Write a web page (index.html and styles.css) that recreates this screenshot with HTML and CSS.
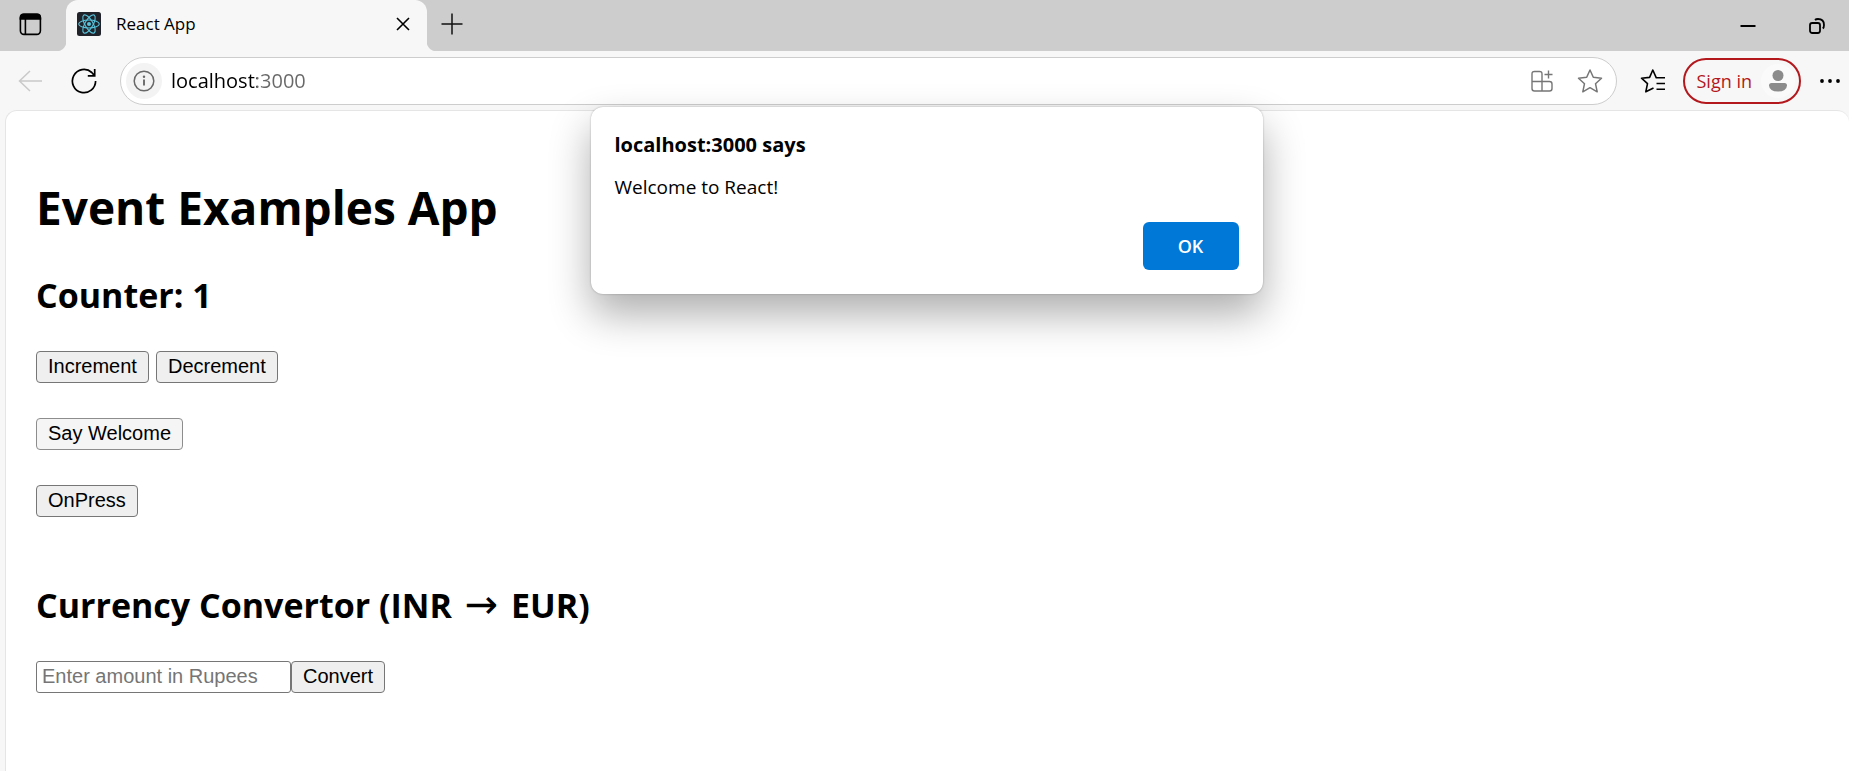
FILE: index.html
```html
<!DOCTYPE html>
<html lang="en">
<head>
<meta charset="utf-8">
<title>React App</title>
<link rel="stylesheet" href="styles.css">
</head>
<body>
<header class="tab-strip">
  <button class="icon-button tab-actions" aria-label="Tab actions">
    <svg width="24" height="24" viewBox="0 0 24 24" fill="none" stroke="#000" stroke-width="1.6"><rect x="2.4" y="2.4" width="20" height="20" rx="3.6"/><path d="M2.4 7V5.500Q2.400 2.400 5.500 2.400H19.300Q22.400 2.400 22.400 5.500V7Z" fill="#000"/><path d="M7.400 7V22"/></svg>
  </button>
  <div class="tab">
    <svg class="favicon" width="24" height="24" viewBox="0 0 24 24" fill="none" stroke="#58c4dc" stroke-width="1.1"><rect width="24" height="24" rx="2.500" fill="#20232a" stroke="none"/><ellipse cx="12" cy="12" rx="10.300" ry="4"/><ellipse cx="12" cy="12" rx="10.300" ry="4" transform="rotate(60 12 12)"/><ellipse cx="12" cy="12" rx="10.300" ry="4" transform="rotate(120 12 12)"/><circle cx="12" cy="12" r="2" fill="#58c4dc" stroke="none"/></svg>
    <span class="tab-title">React App</span>
    <button class="icon-button" aria-label="Close tab">
      <svg width="14" height="14" viewBox="0 0 14 14" fill="none" stroke="#000" stroke-width="1.600"><path d="M1 1L13 13M13 1L1 13"/></svg>
    </button>
  </div>
  <button class="icon-button new-tab" aria-label="New tab">
    <svg width="22" height="22" viewBox="0 0 22 22" fill="none" stroke="#111" stroke-width="1.500"><path d="M11 .5V21.500M.5 11H21.500"/></svg>
  </button>
  <div class="window-controls">
    <button class="icon-button" aria-label="Minimize">
      <svg width="16" height="16" viewBox="0 0 16 16" stroke="#000" stroke-width="2"><path d="M.5 8H15.500"/></svg>
    </button>
    <button class="icon-button" aria-label="Restore">
      <svg width="16" height="16" viewBox="0 0 16 16" fill="none" stroke="#000" stroke-width="1.800"><rect x="1" y="5" width="10" height="10" rx="2.200"/><path d="M6 2Q7 1 9 1Q15 1 15 7Q15 9.500 13.800 10.500"/></svg>
    </button>
  </div>
</header>
<nav class="toolbar">
  <button class="icon-button" aria-label="Back">
    <svg width="24" height="24" viewBox="0 0 24 24" fill="none" stroke="#c9c9c9" stroke-width="1.500"><path d="M12 2L1.500 12L12 22M1.500 12H24"/></svg>
  </button>
  <button class="icon-button" aria-label="Refresh">
    <svg width="26" height="26" viewBox="0 0 26 26" fill="none" stroke="#000" stroke-width="1.700"><path d="M24.600 13A11.600 11.600 0 1 1 20.800 4.500L23.500 7.600M23.700 1V7.900H16.800"/></svg>
  </button>
  <div class="address-bar">
    <button class="icon-button site-info" aria-label="View site information">
      <svg width="22" height="22" viewBox="0 0 22 22" fill="none" stroke="#686868" stroke-width="1.500"><circle cx="11" cy="11" r="9.800"/><path d="M11 9.500V15.500" stroke-width="1.900"/><circle cx="11" cy="6.800" r="1.200" fill="#686868" stroke="none"/></svg>
    </button>
    <input class="address-input" type="text" value="localhost:3000" aria-label="Address">
    <button class="icon-button" aria-label="Apps">
      <svg width="24" height="24" viewBox="0 0 24 24" fill="none" stroke="#767676" stroke-width="1.400"><path d="M12 22V5Q12 2.500 9.500 2.500H4.500Q2 2.500 2 5V19.500Q2 22 4.500 22H19.500Q22 22 22 19.500V15Q22 12.500 19.500 12.500H2M18.500 1.500V9.500M14.500 5.500H22.500"/></svg>
    </button>
    <button class="icon-button" aria-label="Add to favorites">
      <svg width="26" height="26" viewBox="0 0 26 26" fill="none" stroke="#767676" stroke-width="1.500" stroke-linejoin="round"><path d="M13 2L16.300 9.300L24.500 10.200L18.500 15.700L20.200 23.800L13 19.700L5.800 23.800L7.500 15.700L1.500 10.200L9.700 9.300Z"/></svg>
    </button>
  </div>
  <button class="icon-button" aria-label="Favorites">
    <svg width="26" height="26" viewBox="0 0 26 26" fill="none" stroke="#000" stroke-width="1.600" stroke-linejoin="round"><path d="M25 9.800H16.300L12.800 2L9.600 9.400L1.500 10.200L7.500 15.700L5.800 23.800L13.500 20M16.500 15.500H25M16.500 21.200H25"/></svg>
  </button>
  <button class="sign-in">Sign in
    <span class="avatar"><svg width="18" height="22" viewBox="0 0 18 22" fill="#8b8b8b"><circle cx="9" cy="5.500" r="5.500"/><path d="M2.500 13H15.500Q18 13 18 15.500Q17.500 21.500 9 21.500Q.5 21.500 0 15.500Q0 13 2.500 13Z"/></svg></span>
  </button>
  <button class="icon-button" aria-label="Settings and more">
    <svg width="20" height="4" viewBox="0 0 20 4"><circle cx="2" cy="2" r="1.900"/><circle cx="10" cy="2" r="1.900"/><circle cx="18" cy="2" r="1.900"/></svg>
  </button>
</nav>
<main class="page">
  <h1 class="title">Event Examples App</h1>
  <h2 class="heading">Counter: 1</h2>
  <div class="row spaced">
    <button class="btn">Increment</button>
    <button class="btn">Decrement</button>
  </div>
  <div class="row"><button class="btn btn-active">Say Welcome</button></div>
  <div class="row"><button class="btn">OnPress</button></div>
  <section class="convertor">
    <h2 class="heading">Currency Convertor (INR <span class="arrow">→</span> EUR)</h2>
    <form class="row">
      <input class="amount" type="text" placeholder="Enter amount in Rupees" aria-label="Amount in rupees">
      <button class="btn" type="button">Convert</button>
    </form>
  </section>
</main>
<div class="alert" role="alertdialog" aria-labelledby="alert-title" aria-describedby="alert-text">
  <h2 class="alert-title" id="alert-title">localhost:3000 says</h2>
  <p class="alert-text" id="alert-text">Welcome to React!</p>
  <button class="alert-ok">OK</button>
</div>
</body>
</html>
```
FILE: styles.css
```css
* {
  box-sizing: border-box;
}

body {
  margin: 0;
  min-height: 100vh;
  display: flex;
  flex-direction: column;
  background: #f7f7f7;
  color: #000;
  font-family: "Open Sans", "Noto Sans", sans-serif;
  overflow: hidden;
}

svg {
  display: block;
}

.icon-button {
  flex: none;
  display: flex;
  align-items: center;
  justify-content: center;
  padding: 0;
  border: 0;
  background: none;
}

.tab-strip {
  display: flex;
  align-items: center;
  height: 51px;
  padding: 0 24px 0 18px;
  background: #cdcdcd;
}

.tab-actions,
.new-tab {
  margin-bottom: 4px;
}

.tab {
  position: relative;
  display: flex;
  align-items: center;
  align-self: stretch;
  gap: 15px;
  width: 361px;
  margin: 0 14px 0 24px;
  padding: 0 17px 3px 11px;
  border-radius: 12px 12px 0 0;
  background: #f7f7f7;
}

.tab::before,
.tab::after {
  content: "";
  position: absolute;
  bottom: 0;
  width: 10px;
  height: 10px;
}

.tab::before {
  right: 100%;
  background: radial-gradient(circle at 0 0, #cdcdcd 10px, #f7f7f7 11px);
}

.tab::after {
  left: 100%;
  background: radial-gradient(circle at 100% 0, #cdcdcd 10px, #f7f7f7 11px);
}

.tab-title {
  flex: 1;
  font-size: 17px;
  line-height: 24px;
}

.window-controls {
  display: flex;
  gap: 53px;
  margin-left: auto;
}

.toolbar {
  display: flex;
  align-items: center;
  height: 59px;
  padding: 0 9px 0 18px;
}

.toolbar > .icon-button:first-child {
  margin-right: 29px;
}

.address-bar {
  flex: 1;
  display: flex;
  align-items: center;
  gap: 23px;
  height: 48px;
  margin: 0 23px;
  padding: 0 13px 0 5px;
  border: 1px solid #cdcdcd;
  border-radius: 24px;
  background: #fff;
}

.site-info {
  width: 36px;
  height: 36px;
  border-radius: 50%;
  background: #f3f3f3;
}

.address-input {
  flex: 1;
  min-width: 0;
  margin-left: -14px;
  padding: 0;
  border: 0;
  outline: 0;
  background: linear-gradient(to right, #000 86px, #686868 86px);
  background-clip: text;
  color: transparent;
  font: 20px/28px "Open Sans", "Noto Sans", sans-serif;
}

.sign-in {
  display: flex;
  align-items: center;
  gap: 9px;
  height: 46px;
  margin: 0 19px 0 17px;
  padding: 0 4px 0 12px;
  border: 2px solid #b3181d;
  border-radius: 23px;
  background: #f7f7f7;
  color: #b3181d;
  font: 18px/24px "Open Sans", "Noto Sans", sans-serif;
}

.avatar {
  display: flex;
  align-items: center;
  justify-content: center;
  width: 34px;
  height: 34px;
  border-radius: 50%;
  background: #fafafa;
}

.page {
  flex: 1;
  margin-left: 5px;
  padding: 64px 30px 32px;
  border: 1px solid #e5e5e5;
  border-width: 1px 0 0 1px;
  border-radius: 12px 12px 0 0;
  background: #fff;
}

.title {
  margin: 0 0 32px;
  font-size: 46px;
  line-height: 64px;
}

.heading {
  margin: 0 0 32px;
  font-size: 34px;
  line-height: 48px;
}

.arrow {
  margin: 0 4px;
  font: 40px/40px "DejaVu Sans", sans-serif;
}

.row {
  display: flex;
  margin-bottom: 35px;
}

.spaced {
  gap: 7px;
}

.btn {
  height: 32px;
  padding: 0 11px 2px;
  border: 1px solid #767676;
  border-radius: 4px;
  background: #efefef;
  color: #000;
  font: 20px/28px "Liberation Sans", Arial, sans-serif;
}

.btn-active {
  border-color: #8d8d8d;
  background: #f5f5f5;
}

.convertor {
  margin-top: 64px;
}

.amount {
  width: 255px;
  height: 32px;
  padding: 0 5px 2px;
  border: 1px solid #767676;
  border-radius: 3px;
  background: #fff;
  font: 20px/28px "Liberation Sans", Arial, sans-serif;
}

.amount::placeholder {
  color: #757575;
}

.alert {
  position: absolute;
  top: 107px;
  left: calc(50% - 334px);
  display: flex;
  flex-direction: column;
  width: 672px;
  padding: 24px;
  border-radius: 12px;
  background: #fff;
  box-shadow: 0 0 2px rgba(0, 0, 0, 0.3), 0 20px 42px rgba(0, 0, 0, 0.32);
}

.alert-title {
  margin: 0 0 15px;
  font-size: 20px;
  line-height: 28px;
}

.alert-text {
  margin: 0 0 22px;
  font-size: 19px;
  line-height: 26px;
}

.alert-ok {
  align-self: flex-end;
  width: 96px;
  height: 48px;
  border: 0;
  border-radius: 6px;
  background: #0078d7;
  color: #fff;
  font: 600 18px/24px "Open Sans", "Noto Sans", sans-serif;
}
```
